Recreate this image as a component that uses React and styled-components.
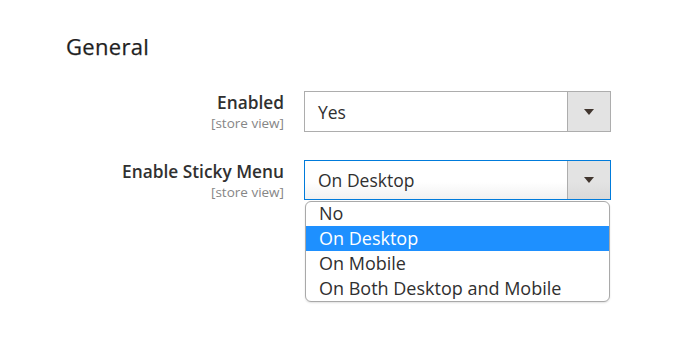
import React from "react";
import styled, { createGlobalStyle } from "styled-components";

const GlobalStyle = createGlobalStyle`
  body {
    margin: 0;
    background: #fff;
    font-family: "Open Sans", "Noto Sans", sans-serif;
    color: #303030;
  }
`;

const Page = styled.div`
  width: 685px;
  height: 348px;
  padding-top: 31px;
  box-sizing: border-box;
`;

const Legend = styled.h2`
  margin: 0 0 30px 66px;
  font-size: 22px;
  line-height: 30px;
  font-weight: 400;
  letter-spacing: 0.3px;
  color: #1f1f1f;
  -webkit-text-stroke: 0.25px #1f1f1f;
`;

const Fields = styled.div`
  display: flex;
  flex-direction: column;
  gap: 28px;
`;

const Row = styled.div`
  display: flex;
  gap: 20px;
  align-items: flex-start;
`;

const Label = styled.div`
  width: 284px;
  text-align: right;
`;

const LabelText = styled.div`
  font-size: 17.3px;
  line-height: 23px;
  font-weight: 600;
  color: #303030;
`;

const Scope = styled.div`
  font-size: 13.5px;
  line-height: 18px;
  color: #868686;
`;

const Control = styled.div`
  position: relative;
  width: 307px;
`;

const SelectBox = styled.div`
  display: flex;
  height: ${(p) => (p.$open ? 40 : 41)}px;
  box-sizing: border-box;
  border: 1px solid ${(p) => (p.$open ? "#007bdb" : "#adadad")};
  background: ${(p) =>
    p.$open ? "linear-gradient(#ffffff 55%, #f1f1f1)" : "#ffffff"};
`;

const Value = styled.div`
  flex: 1;
  display: flex;
  align-items: center;
  padding-left: 13px;
  font-size: 17.5px;
  color: #303030;
`;

const Toggle = styled.div`
  width: 42px;
  display: flex;
  align-items: center;
  justify-content: center;
  border-left: 1px solid #adadad;
  background: ${(p) =>
    p.$open ? "linear-gradient(#e3e3e3 55%, #d9d9d9)" : "#e3e3e3"};
`;

const Arrow = styled.span`
  width: 0;
  height: 0;
  border-left: 5px solid transparent;
  border-right: 5px solid transparent;
  border-top: 6px solid #41362f;
`;

const Options = styled.ul`
  position: absolute;
  top: 41px;
  left: 1px;
  width: 305px;
  box-sizing: border-box;
  margin: 0;
  padding: 0;
  list-style: none;
  background: #fff;
  border: 1px solid #a9a9a9;
  border-radius: 6px;
  overflow: hidden;
  box-shadow: 0 1px 2px rgba(0, 0, 0, 0.12);
`;

const Option = styled.li`
  height: 25px;
  line-height: 25px;
  padding-left: 13px;
  font-size: 18px;
  color: ${(p) => (p.$active ? "#ffffff" : "#303030")};
  background: ${(p) => (p.$active ? "#1e90ff" : "transparent")};

  &:first-child {
    height: 24px;
    line-height: 23px;
  }
`;

const Select = ({ value, open, options = [] }) => (
  <Control>
    <SelectBox $open={open}>
      <Value>{value}</Value>
      <Toggle $open={open}>
        <Arrow />
      </Toggle>
    </SelectBox>
    {open && (
      <Options>
        {options.map((o) => (
          <Option key={o} $active={o === value}>
            {o}
          </Option>
        ))}
      </Options>
    )}
  </Control>
);

const Field = ({ label, children }) => (
  <Row>
    <Label>
      <LabelText>{label}</LabelText>
      <Scope>[store view]</Scope>
    </Label>
    {children}
  </Row>
);

const App = () => (
  <Page>
    <GlobalStyle />
    <Legend>General</Legend>
    <Fields>
      <Field label="Enabled">
        <Select value="Yes" />
      </Field>
      <Field label="Enable Sticky Menu">
        <Select
          value="On Desktop"
          open
          options={["No", "On Desktop", "On Mobile", "On Both Desktop and Mobile"]}
        />
      </Field>
    </Fields>
  </Page>
);

export default App;
